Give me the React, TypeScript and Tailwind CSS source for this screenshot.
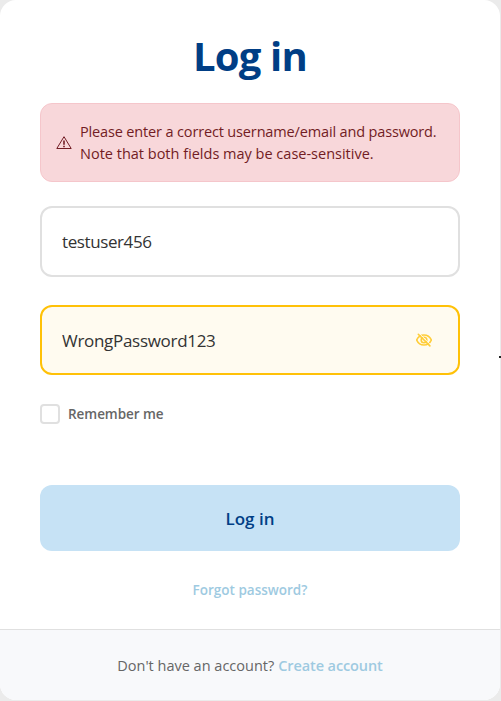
import { useState } from "react";

function WarningIcon() {
  return (
    <svg className="h-4 w-4 shrink-0" viewBox="0 0 16 16" fill="none" stroke="currentColor">
      <path d="M8 1.700 L15.200 13.500 H.8 Z" strokeWidth="1" strokeLinejoin="round" />
      <path d="M8 5.500v4.200" strokeWidth="1.600" />
      <path d="M8 10.700v1.500" strokeWidth="1.600" />
    </svg>
  );
}

function EyeOffIcon() {
  return (
    <svg className="h-4 w-4" viewBox="0 0 16 16" fill="none" stroke="currentColor" strokeLinecap="round" strokeLinejoin="round">
      <path d="M.7 8C2.200 4.600 4.800 3 8 3S13.800 4.600 15.300 8C13.800 11.400 11.200 13 8 13S2.200 11.400.7 8Z" strokeWidth="1.600" />
      <circle cx="8" cy="8" r="2.800" strokeWidth="1.600" />
      <path d="M3.600 1.800 L14.800 13" stroke="#fffbf0" strokeWidth="1" />
      <path d="M2.300 2.300 L13.900 13.900" strokeWidth="1.600" />
    </svg>
  );
}

export default function App() {
  const [username, setUsername] = useState("testuser456");
  const [password, setPassword] = useState("WrongPassword123");
  const [hidden, setHidden] = useState(false);

  return (
    <main className="relative h-[701px] w-[501px] overflow-hidden bg-[#ebebeb] font-['Open_Sans','Noto_Sans',sans-serif]">
      <div className="flex h-[700px] w-[500px] flex-col overflow-hidden rounded-2xl bg-white">
        <form className="flex h-[629px] shrink-0 flex-col px-10 pt-[31px]" onSubmit={(e) => e.preventDefault()}>
          <h1 className="h-[50px] text-center text-[40px] leading-[50px] font-bold tracking-[-0.8px] text-[#003e85]">Log in</h1>

          <div className="mt-[22px] flex h-[79px] shrink-0 items-center gap-2 rounded-xl border border-[#f5c6cb] bg-[#f8d7da] px-[15px] text-[#721c24]">
            <WarningIcon />
            <p className="text-[14.5px] leading-[22px] whitespace-nowrap">
              <span className="tracking-[-0.15px]">Please enter a correct username/email and password.</span>
              <br />
              Note that both fields may be case-sensitive.
            </p>
          </div>

          <input
            className="mt-6 h-[71px] w-full shrink-0 rounded-xl border-2 border-[#e0e0e0] bg-white px-5 text-[17px] tracking-[-0.4px] text-[#333333] outline-none"
            value={username}
            onChange={(e) => setUsername(e.target.value)}
          />

          <div className="mt-7 flex h-[70px] shrink-0 items-center rounded-xl border-2 border-[#ffc107] bg-[#fffbf0] pr-[26px] pl-5">
            <input
              className="min-w-0 flex-1 bg-transparent pt-px text-[17px] tracking-[-0.3px] text-[#333333] outline-none"
              type={hidden ? "password" : "text"}
              value={password}
              onChange={(e) => setPassword(e.target.value)}
            />
            <button type="button" className="text-[#ffcd39]" onClick={() => setHidden(!hidden)}>
              <EyeOffIcon />
            </button>
          </div>

          <label className="mt-[29px] flex h-5 shrink-0 items-center gap-2">
            <input type="checkbox" className="h-5 w-5 appearance-none rounded border-2 border-[#e0e0e0] bg-white" />
            <span className="text-[13.5px] leading-5 font-semibold tracking-[-0.05px] text-[#666666]">Remember me</span>
          </label>

          <button className="mt-[61px] h-[66px] shrink-0 rounded-xl bg-[#c6e2f5] pt-px text-[17px] font-semibold text-[#003e85]">Log in</button>

          <div className="mt-[29px] flex h-5 justify-center">
            <a className="text-[13.5px] leading-5 font-semibold text-[#9ecae1]">Forgot password?</a>
          </div>
        </form>

        <footer className="flex h-[71px] shrink-0 items-center justify-center gap-1 border-t border-[#e0e0e0] bg-[#f8f9fb] pt-px text-[14.5px] text-[#666666]">
          <span>Don't have an account?</span>
          <a className="font-semibold tracking-[-0.1px] text-[#9ecae1]">Create account</a>
        </footer>
      </div>
      <span className="absolute top-[356px] right-0 h-0.5 w-0.5 bg-[#222222]" />
    </main>
  );
}
